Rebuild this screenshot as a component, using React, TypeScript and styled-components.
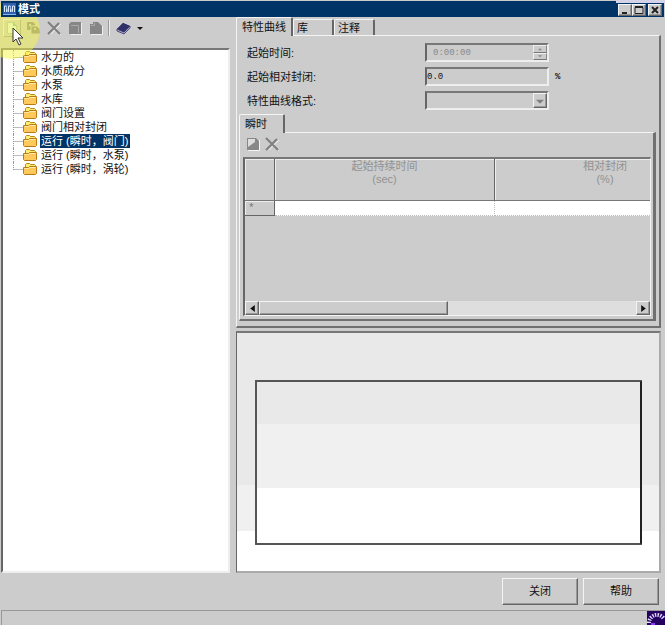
import React, { useState } from 'react';
import styled, { createGlobalStyle, css } from 'styled-components';

const GlobalStyle = createGlobalStyle`
  * { box-sizing: border-box; }
  body {
    margin: 0;
    background: #ccc;
    color: #111;
    font: 11px/14px "Liberation Sans", "Noto Sans CJK SC", sans-serif;
  }
  button, input, select { font: inherit; color: inherit; margin: 0; padding: 0; border-radius: 0; }
`;

const raised = css`
  border: 1px solid;
  border-color: #f4f4f4 #666 #666 #f4f4f4;
  box-shadow: inset -1px -1px 0 #999;
`;

const sunken = css`
  border: 2px solid;
  border-color: #777 #eee #eee #666;
`;

const Window = styled.div`
  position: relative;
  min-height: 100vh;
  display: flex;
  flex-direction: column;
  overflow: hidden;
`;

const TitleBar = styled.header`
  position: relative;
  z-index: 2;
  display: flex;
  align-items: center;
  height: 16px;
  margin: 1px 1px 0;
  padding: 0 2px;
  gap: 2px;
  background: #003366;
  color: #fff;
`;

const Title = styled.h1`
  flex: 1;
  margin: 0;
  font-size: 11px;
  line-height: 14px;
`;

const TopStrip = styled.div`
  position: absolute;
  z-index: 2;
  top: 0;
  right: 0;
  width: 49px;
  height: 3px;
  background: #d4d3e8;
`;

const CaptionButton = styled.button<{ $apart?: boolean }>`
  ${raised}
  display: flex;
  width: 14px;
  height: 12px;
  margin-top: 1px;
  margin-left: ${p => (p.$apart ? 0 : -2)}px;
  background: #ccc;
`;

const Main = styled.main`
  flex: 1;
  display: grid;
  grid-template-columns: minmax(0, 229fr) minmax(0, 425fr);
  gap: 6px;
  padding: 0 4px 0 1px;
`;

const Column = styled.section`
  display: flex;
  flex-direction: column;
  min-width: 0;
`;

const Toolbar = styled.div`
  display: flex;
  align-items: center;
  height: 31px;
  padding: 0 2px 10px;
  gap: 3px;
`;

const ToolButton = styled.button<{ $hot?: boolean }>`
  display: flex;
  align-items: center;
  justify-content: center;
  width: 18px;
  height: 18px;
  border: 1px solid transparent;
  background: none;
  ${p => p.$hot && css`border-color: #eee #999 #999 #eee;`}
`;

const MenuButton = styled(ToolButton)`
  width: 32px;
  gap: 6px;
`;

const Divider = styled.div`
  width: 2px;
  height: 16px;
  border-left: 1px solid #999;
  border-right: 1px solid #eee;
`;

const Tree = styled.ul`
  ${sunken}
  flex: 1;
  margin: 0;
  padding: 0;
  list-style: none;
  background: #fff;
`;

const TreeRow = styled.li`
  display: flex;
  align-items: center;
  height: 14px;
  padding-left: 10px;
  &::before {
    content: '';
    width: 9px;
    height: 14px;
    border-left: 1px dotted #999;
    background: linear-gradient(#bbb, #bbb) 0 7px / 9px 1px no-repeat;
  }
  &:last-child::before { height: 8px; align-self: flex-start; }
`;

const TreeLabel = styled.button<{ $selected: boolean }>`
  height: 14px;
  margin-left: 3px;
  padding: 0 2px 0 1px;
  border: 0;
  line-height: 14px;
  white-space: nowrap;
  background: ${p => (p.$selected ? '#003366' : 'transparent')};
  color: ${p => (p.$selected ? '#fff' : '#111')};
`;

const TabList = styled.div`
  display: flex;
  align-items: flex-end;
  height: 18px;
`;

const Tab = styled.button<{ $active: boolean }>`
  height: 16px;
  min-width: 41px;
  padding: 0 3px;
  text-align: left;
  white-space: nowrap;
  background: #ccc;
  border: solid;
  border-width: 1px 2px 0 1px;
  border-color: #f4f4f4 #666 #ccc #f4f4f4;
  border-radius: 2px 2px 0 0;
  ${p => p.$active && css`
    z-index: 1;
    margin-bottom: -1px;
    height: 19px;
    padding: 0 5px;
  `}
`;

const Panel = styled.div`
  border: solid;
  border-width: 1px 2px 2px 1px;
  border-color: #f4f4f4 #707070 #707070 #f4f4f4;
`;

const OuterPanel = styled(Panel)`
  padding: 7px 3px 5px 2px;
`;

const Form = styled.div`
  display: grid;
  grid-template-columns: 172px 124px auto;
  align-items: center;
  justify-content: start;
  row-gap: 5px;
  padding-left: 8px;
  column-gap: 6px;
  margin-bottom: 4px;
`;

const Label = styled.label`
  white-space: nowrap;
`;

const Field = styled.div`
  ${sunken}
  display: flex;
  height: 19px;
  background: #ccc;
`;

const TextInput = styled.input`
  flex: 1;
  min-width: 0;
  border: 0;
  outline: 0;
  background: transparent;
  font: 9px/14px "Liberation Mono", monospace;
  &:disabled { color: #888; padding-left: 6px; }
`;

const Unit = styled.span`
  font: bold 9px/14px "Liberation Mono", monospace;
`;

const Select = styled.select`
  flex: 1;
  min-width: 0;
  border: 0;
  appearance: none;
  background: transparent;
`;

const ArrowBox = styled.span`
  ${raised}
  display: flex;
  align-items: center;
  justify-content: center;
  width: 14px;
`;

const Spinner = styled.div`
  display: grid;
  grid-template-rows: 1fr 1fr;
  width: 14px;
`;

const SpinButton = styled.button`
  display: flex;
  align-items: center;
  justify-content: center;
  min-height: 0;
  border: 1px solid;
  border-color: #eee #888 #777 #eee;
  background: #ccc;
`;

const InnerPanel = styled(Panel)`
  border-right-width: 3px;
  padding: 2px 2px 3px 3px;
`;

const SmallToolbar = styled.div`
  display: flex;
  gap: 1px;
  height: 22px;
  padding-left: 1px;
`;

const GridBox = styled.div`
  border: solid;
  border-width: 2px 1px 1px 2px;
  border-color: #777 #f4f4f4 #f4f4f4 #666;
  display: flex;
  flex-direction: column;
  height: 159px;
`;

const TableClip = styled.div`
  flex: 1;
  overflow: hidden;
`;

const Table = styled.table`
  width: 471px;
  table-layout: fixed;
  border-collapse: separate;
  border-spacing: 0;
`;

const HeadCell = styled.th<{ $width: number }>`
  width: ${p => p.$width}px;
  height: 42px;
  padding: 1px 0 0;
  vertical-align: top;
  border-right: 1px solid #666;
  border-bottom: 1px solid #777;
  box-shadow: inset 1px 1px 0 #eee;
  color: #929292;
  font-weight: 400;
  line-height: 13px;
`;

const RowHead = styled.th`
  height: 15px;
  padding: 0 0 0 3px;
  border-right: 1px solid #666;
  border-bottom: 1px solid #666;
  box-shadow: inset 1px 1px 0 #eee;
  color: #777;
  font: 11px/13px "Liberation Mono", monospace;
  text-align: left;
`;

const Cell = styled.td`
  background: #fff;
  border-right: 1px dotted #bbb;
  border-bottom: 1px dotted #bbb;
`;

const ScrollBar = styled.div`
  display: flex;
  height: 14px;
  background: #dedede;
`;

const ScrollButton = styled.button`
  ${raised}
  display: flex;
  align-items: center;
  justify-content: center;
  width: 14px;
  background: #ccc;
`;

const ScrollTrack = styled.div`
  flex: 1;
`;

const Thumb = styled.div`
  ${raised}
  width: 50%;
  height: 14px;
  background: #ccc;
`;

const ChartPane = styled.div`
  flex: 1;
  display: flex;
  min-height: 200px;
  margin-top: 3px;
  padding: 47px 17px 26px 18px;
  border: solid;
  border-width: 2px 2px 2px 1px;
  border-color: #777 #aaa #aaa #666;
  background: linear-gradient(#e9e9e9 64%, #f0f0f0 64% 83%, #fff 83%);
`;

const Plot = styled.div`
  flex: 1;
  border: 2px solid #555;
  border-right-color: #222;
  border-radius: 1px;
  background: linear-gradient(#e9e9e9 26%, #f0f0f0 26% 66%, #fff 66%);
`;

const Actions = styled.div`
  display: flex;
  justify-content: flex-end;
  gap: 5px;
  padding: 5px 6px 5px;
`;

const ActionButton = styled.button`
  ${raised}
  width: 76px;
  height: 27px;
  padding-bottom: 2px;
  background: #ccc;
`;

const StatusBar = styled.footer`
  display: flex;
  justify-content: flex-end;
  height: 15px;
  margin-left: 1px;
  border-top: 1px solid #999;
  border-left: 1px solid #999;
`;

const Highlight = styled.div`
  position: absolute;
  top: 1px;
  left: -18px;
  width: 58px;
  height: 58px;
  border-radius: 50%;
  background: rgba(245, 245, 70, 0.5);
  pointer-events: none;
`;

const Pointer = styled.svg`
  position: absolute;
  top: 27px;
  left: 12px;
  pointer-events: none;
`;

const AppIcon = () => (
  <svg width="13" height="12" viewBox="0 0 13 12" aria-hidden="true">
    <rect width="13" height="12" fill="#315fac" />
    <path d="M1.5 9V3h2v6M5.5 9V3h2v6M9.5 9V3h2v6" fill="none" stroke="#d8e9ff" />
    <path d="M0 11.5h13M3 3l2 6M7 3l2 6" stroke="#85b6ed" />
  </svg>
);

const FolderIcon = () => (
  <svg width="14" height="12" viewBox="0 0 14 12" aria-hidden="true">
    <path d="M2.5 9V1.5l1-1h3l1 1h4l1 1V9" fill="#ffee70" stroke="#b98516" />
    <path d="M.5 4.5h5l1-1h7v7l-1 1h-11l-1-1z" fill="#ffc95c" stroke="#b97913" />
    <path d="M1.5 5.5h4l1-1h6" fill="none" stroke="#ffe9a8" />
  </svg>
);

const NewIcon = () => (
  <svg width="14" height="14" viewBox="0 0 14 14" aria-hidden="true">
    <path d="M2.5 1.5h6l3 3v8h-9z" fill="#e4f6ee" stroke="#a4c0b8" />
    <path d="M8.5 1.5v3h3" fill="#8fc3c0" stroke="#75a6aa" />
  </svg>
);

const CopyIcon = () => (
  <svg width="15" height="14" viewBox="0 0 15 14" aria-hidden="true">
    <path d="M1 1h6l2 2v6H1z" fill="#808080" />
    <path d="M5 5h6l3 3v5H5z" fill="#808080" stroke="#c8c8c8" />
    <path d="M3 3h2v2H3zM8 7h2v2H8z" fill="#c8c8c8" />
  </svg>
);

const CrossIcon = () => (
  <svg width="14" height="14" viewBox="0 0 14 14" aria-hidden="true">
    <path d="M2 2l12 12M14 3L4 13" stroke="#eee" />
    <path d="M1 1l12 12M12 2L1 13" stroke="#808080" strokeWidth="2" />
  </svg>
);

const BoxIcon = () => (
  <svg width="14" height="14" viewBox="0 0 14 14" aria-hidden="true">
    <path d="M3 13.5h10.5V2" fill="none" stroke="#eee" />
    <path d="M1 3l2-2h10v12H1z" fill="#868686" />
    <path d="M3 4.5h7.5V12" fill="none" stroke="#aaa" />
  </svg>
);

const PageIcon = () => (
  <svg width="14" height="14" viewBox="0 0 14 14" aria-hidden="true">
    <path d="M2 13.5h11.5V5" fill="none" stroke="#eee" />
    <path d="M1 3h3V1h5l4 4v8H1z" fill="#868686" />
    <path d="M2 4.5h3.5V2" fill="none" stroke="#aaa" />
  </svg>
);

const EditPageIcon = () => (
  <svg width="14" height="14" viewBox="0 0 14 14" aria-hidden="true">
    <path d="M2 13.5h11.5V3" fill="none" stroke="#f4f4f4" />
    <path d="M1 1h9l3 3v9H1z" fill="#888" />
    <path d="M2 2h7v3L2 10z" fill="#ddd" />
  </svg>
);

const BookIcon = () => (
  <svg width="15" height="14" viewBox="0 0 15 14" aria-hidden="true">
    <path d="M1 8l6-6 7 3-6 7z" fill="#303068" />
    <path d="M1 8v2l7 3 6-6V5l-6 6z" fill="#a2a3c5" stroke="#505078" />
    <path d="M1 8l6-6 7 3-6 6z" fill="#303068" />
  </svg>
);

type Direction = 'up' | 'down' | 'left' | 'right';
const arrowPaths: Record<Direction, string> = {
  up: 'M0 5l3-3 3 3z',
  down: 'M0 2h6L3 5z',
  left: 'M5 0v6L1 3z',
  right: 'M1 0v6l4-3z',
};

const Arrow = ({ direction, color = '#111', size = 6 }: { direction: Direction; color?: string; size?: number }) => (
  <svg width={size} height={size} viewBox="0 0 6 6" aria-hidden="true">
    <path d={arrowPaths[direction]} fill={color} />
  </svg>
);

const BusyIcon = () => (
  <svg width="18" height="15" viewBox="0 0 18 15" aria-hidden="true">
    <rect width="18" height="15" fill="#250060" />
    <path d="M2 12a8 8 0 0 1 15-4" fill="none" stroke="#e2d8ff" strokeWidth="4" strokeDasharray="1.4 1.2" />
    <path d="M4 12h4v3H4z" fill="#9138ff" />
  </svg>
);

const captionShapes = [
  { name: '最小化', path: 'M3 8h5' },
  { name: '最大化', path: 'M2 2.5h8v6H2zM2 1.5h8' },
  { name: '关闭窗口', path: 'M3 2l6 6M9 2L3 8' },
];

const patterns = ['水力的', '水质成分', '水泵', '水库', '阀门设置', '阀门相对封闭', '运行 (瞬时，阀门)', '运行 (瞬时，水泵)', '运行 (瞬时，涡轮)'];
const tabs = ['特性曲线', '库', '注释'];

export default function App() {
  const [selected, setSelected] = useState(6);
  const [tab, setTab] = useState(0);
  const [closure, setClosure] = useState('0.0');

  return (
    <>
      <GlobalStyle />
      <Window>
        <TitleBar>
          <AppIcon />
          <Title>模式</Title>
          {captionShapes.map((shape, i) => (
            <CaptionButton key={shape.name} aria-label={shape.name} $apart={i === 2}>
              <svg width="12" height="10" viewBox="0 0 12 10" aria-hidden="true">
                <path d={shape.path} fill="none" stroke="#222" strokeWidth={i === 1 ? 1 : 2} />
              </svg>
            </CaptionButton>
          ))}
        </TitleBar>
        <TopStrip />

        <Main>
          <Column>
            <Toolbar role="toolbar" aria-label="模式">
              <ToolButton $hot aria-label="新建"><NewIcon /></ToolButton>
              <ToolButton aria-label="复制"><CopyIcon /></ToolButton>
              <ToolButton aria-label="删除"><CrossIcon /></ToolButton>
              <ToolButton aria-label="重命名"><BoxIcon /></ToolButton>
              <ToolButton aria-label="报告"><PageIcon /></ToolButton>
              <Divider />
              <MenuButton aria-label="工程库"><BookIcon /><Arrow direction="down" /></MenuButton>
            </Toolbar>
            <Tree>
              {patterns.map((name, i) => (
                <TreeRow key={name}>
                  <FolderIcon />
                  <TreeLabel $selected={selected === i} aria-pressed={selected === i} onClick={() => setSelected(i)}>
                    {name}
                  </TreeLabel>
                </TreeRow>
              ))}
            </Tree>
          </Column>

          <Column>
            <TabList role="tablist">
              {tabs.map((name, i) => (
                <Tab key={name} role="tab" aria-selected={tab === i} $active={tab === i} onClick={() => setTab(i)}>
                  {name}
                </Tab>
              ))}
            </TabList>
            <OuterPanel role="tabpanel">
              <Form>
                <Label htmlFor="start-time">起始时间:</Label>
                <Field>
                  <TextInput id="start-time" value="0:00:00" disabled readOnly />
                  <Spinner>
                    <SpinButton disabled aria-label="增加"><Arrow direction="up" color="#888" size={4} /></SpinButton>
                    <SpinButton disabled aria-label="减少"><Arrow direction="down" color="#888" size={4} /></SpinButton>
                  </Spinner>
                </Field>
                <span />
                <Label htmlFor="closure">起始相对封闭:</Label>
                <Field>
                  <TextInput id="closure" value={closure} onChange={e => setClosure(e.target.value)} />
                </Field>
                <Unit>%</Unit>
                <Label htmlFor="format">特性曲线格式:</Label>
                <Field>
                  <Select id="format" disabled />
                  <ArrowBox><Arrow direction="down" color="#808080" size={8} /></ArrowBox>
                </Field>
              </Form>

              <TabList role="tablist">
                <Tab role="tab" aria-selected $active>瞬时&emsp;</Tab>
              </TabList>
              <InnerPanel role="tabpanel">
                <SmallToolbar>
                  <ToolButton disabled aria-label="新建行"><EditPageIcon /></ToolButton>
                  <ToolButton disabled aria-label="删除行"><CrossIcon /></ToolButton>
                </SmallToolbar>
                <GridBox>
                  <TableClip>
                    <Table>
                      <thead>
                        <tr>
                          <HeadCell $width={30} />
                          <HeadCell $width={220} scope="col">起始持续时间<br />(sec)</HeadCell>
                          <HeadCell $width={221} scope="col">相对封闭<br />(%)</HeadCell>
                        </tr>
                      </thead>
                      <tbody>
                        <tr>
                          <RowHead scope="row">*</RowHead>
                          <Cell />
                          <Cell />
                        </tr>
                      </tbody>
                    </Table>
                  </TableClip>
                  <ScrollBar>
                    <ScrollButton aria-label="向左滚动"><Arrow direction="left" size={7} /></ScrollButton>
                    <ScrollTrack><Thumb /></ScrollTrack>
                    <ScrollButton aria-label="向右滚动"><Arrow direction="right" size={7} /></ScrollButton>
                  </ScrollBar>
                </GridBox>
              </InnerPanel>
            </OuterPanel>
            <ChartPane>
              <Plot />
            </ChartPane>
          </Column>
        </Main>

        <Actions>
          <ActionButton>关闭</ActionButton>
          <ActionButton>帮助</ActionButton>
        </Actions>
        <StatusBar><BusyIcon /></StatusBar>

        <Highlight />
        <Pointer width="13" height="20" viewBox="0 0 13 20" aria-hidden="true">
          <path d="M1 1v14l3-3 3 6 2-1-3-6h5z" fill="#fff" stroke="#333" />
        </Pointer>
      </Window>
    </>
  );
}
